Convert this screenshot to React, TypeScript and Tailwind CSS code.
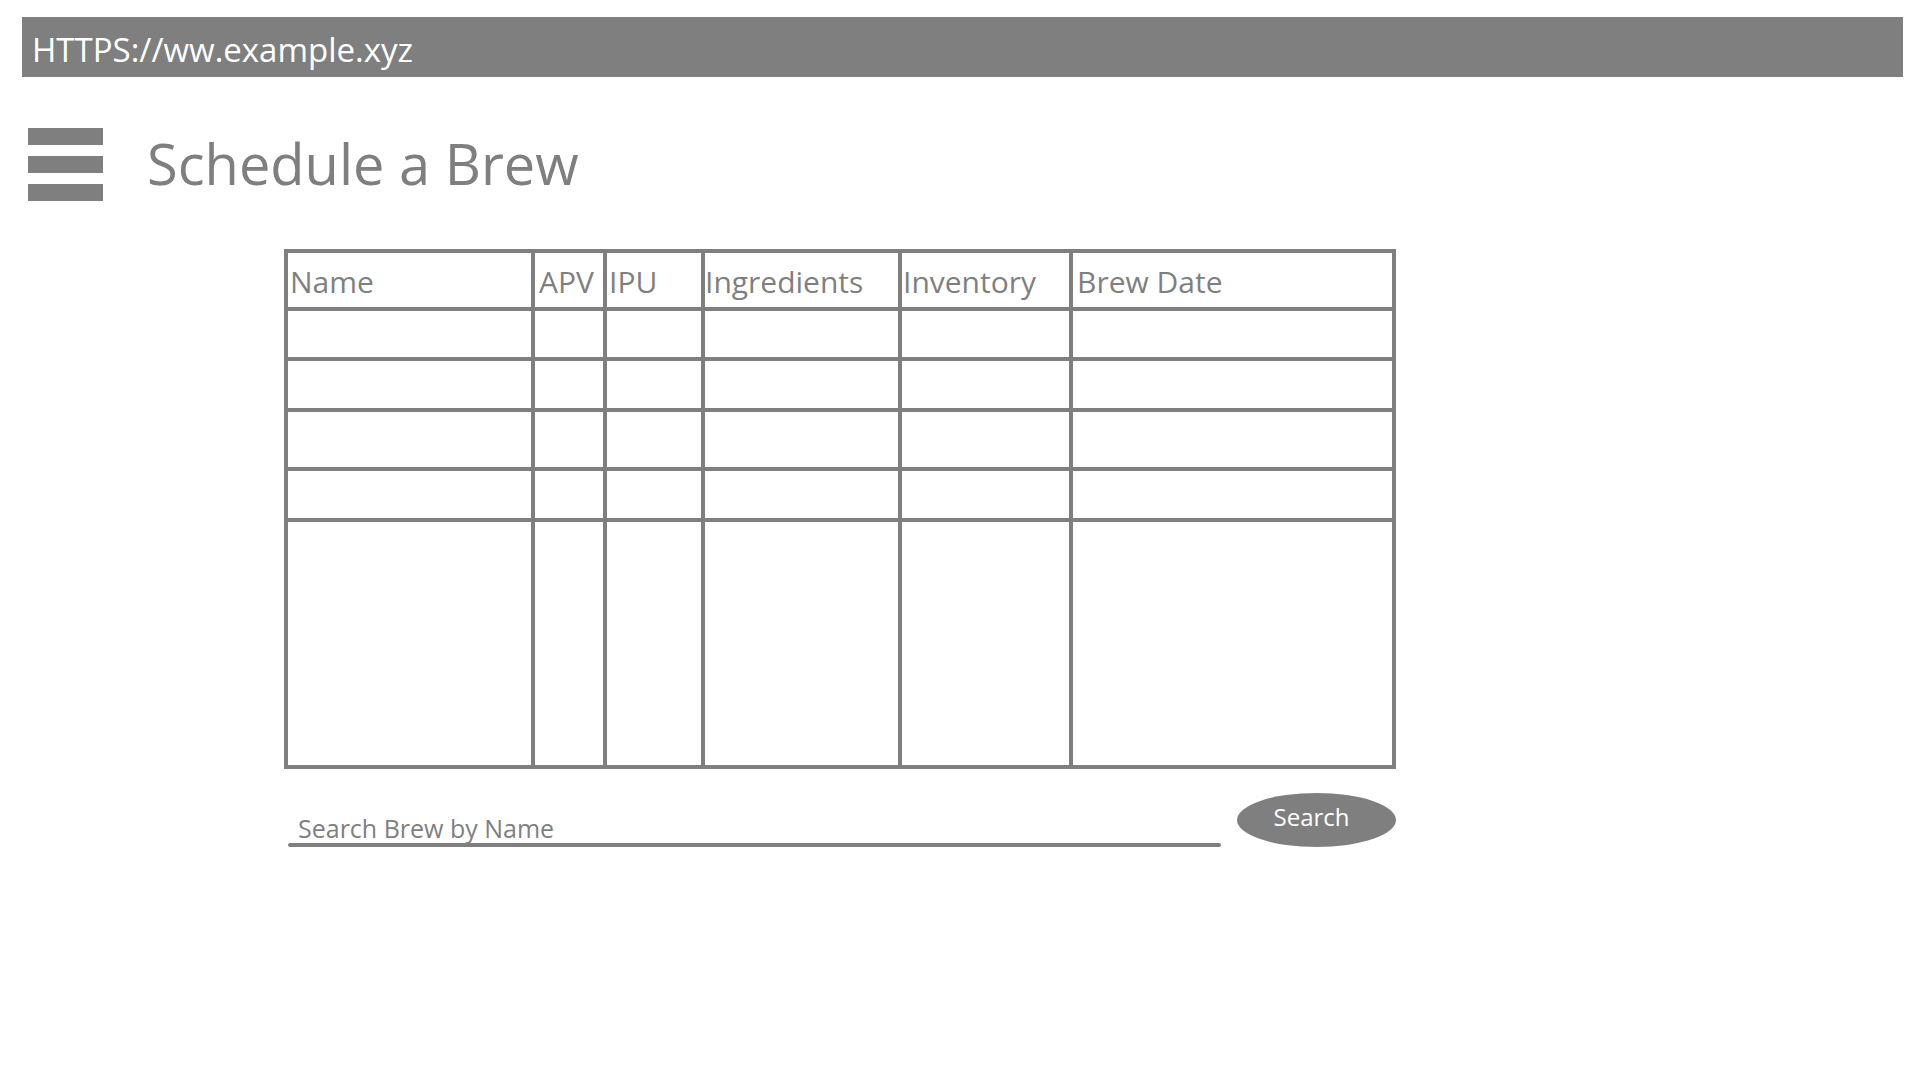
const font = { fontFamily: '"Open Sans", "Noto Sans", sans-serif' }

interface Column {
  label: string
  width: string
  pad: string
}

const columns: Column[] = [
  { label: "Name", width: "w-[243px]", pad: "pl-[2px]" },
  { label: "APV", width: "w-[68px]", pad: "pl-[4px]" },
  { label: "IPU", width: "w-[94px]", pad: "pl-[2px]" },
  { label: "Ingredients", width: "w-[193px]", pad: "pl-0" },
  { label: "Inventory", width: "w-[167px]", pad: "pl-[1px]" },
  { label: "Brew Date", width: "w-[319px]", pad: "pl-[4px]" },
]

// body row heights, last one is the tall empty area
const rowHeights = ["h-[46px]", "h-[47px]", "h-[55px]", "h-[47px]", "h-[243px]"]

function Hamburger() {
  return (
    <div className="mt-[7px] flex w-[75px] flex-col gap-[11px]">
      <div className="h-[17px] bg-[#7f7f7f]" />
      <div className="h-[17px] bg-[#7f7f7f]" />
      <div className="h-[17px] bg-[#7f7f7f]" />
    </div>
  )
}

function BrewTable() {
  return (
    <div className="flex w-[1112px] flex-col gap-[4px] bg-[#7f7f7f] p-[4px]">
      {/* Header */}
      <div className="flex gap-[4px]">
        {columns.map((col) => (
          <div
            key={col.label}
            className={`${col.width} ${col.pad} flex h-[54px] items-end bg-white pb-[3px]`}
          >
            <span className="whitespace-nowrap text-[30px] leading-normal text-[#7f7f7f]">{col.label}</span>
          </div>
        ))}
      </div>

      {/* Empty rows */}
      {rowHeights.map((h, i) => (
        <div key={i} className="flex gap-[4px]">
          {columns.map((col) => (
            <div key={col.label} className={`${col.width} ${h} bg-white`} />
          ))}
        </div>
      ))}
    </div>
  )
}

export default function App() {
  return (
    <div className="min-h-[1081px] w-full bg-white pt-[17px]" style={font}>
      {/* Address bar */}
      <div className="ml-[22px] mr-[17px] h-[60px] bg-[#7f7f7f] pl-[10px] pt-[8px]">
        <span className="text-[33px] leading-normal text-white">HTTPS://ww.example.xyz</span>
      </div>

      {/* Title row */}
      <div className="mt-[44px] flex items-start gap-[44px] pl-[28px]">
        <Hamburger />
        <h1 className="text-[56px] font-normal leading-normal text-[#7f7f7f]">Schedule a Brew</h1>
      </div>

      {/* Table + search */}
      <div className="ml-[284px] mt-[44px] flex w-[1112px] flex-col gap-[24px]">
        <BrewTable />

        <div className="flex items-end gap-[16px]">
          <div className="ml-[4px] flex w-[933px] flex-col">
            <span className="pl-[10px] text-[25px] leading-[30px] text-[#7f7f7f]">Search Brew by Name</span>
            <div className="h-[4px] rounded-full bg-[#7f7f7f]" />
          </div>
          <button className="flex h-[54px] w-[159px] items-center justify-center rounded-[50%] bg-[#7f7f7f] pb-[6px] pr-[10px] text-[24px] leading-normal text-white">
            Search
          </button>
        </div>
      </div>
    </div>
  )
}
